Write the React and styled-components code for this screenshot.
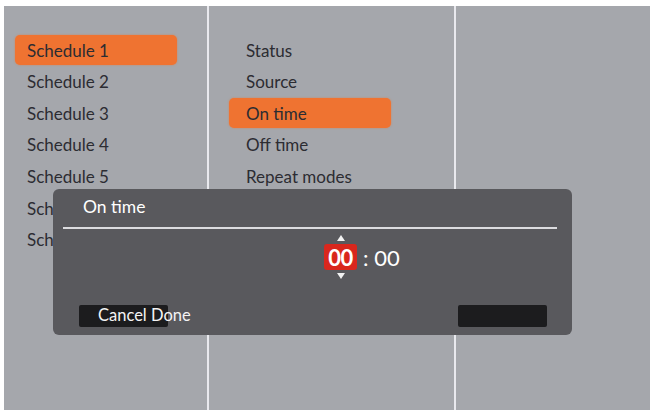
import React, { useState } from 'react';
import styled, { createGlobalStyle } from 'styled-components';

const GlobalStyle = createGlobalStyle`
  html, body {
    margin: 0;
    padding: 0;
    background: #ffffff;
  }
  body {
    font-family: Lato, "Open Sans", sans-serif;
  }
`;

const schedules = ['Schedule 1', 'Schedule 2', 'Schedule 3', 'Schedule 4', 'Schedule 5', 'Schedule 6', 'Schedule 7'];
const settings = ['Status', 'Source', 'On time', 'Off time', 'Repeat modes'];

const Screen = styled.div`
  position: relative;
  margin: 6px 1px 0 4px;
  height: 404px;
  background: #a5a7ac;
  display: grid;
  grid-template-columns: 205px 247px 1fr;
`;

const Column = styled.div`
  border-right: ${(p) => (p.last ? 'none' : '2px solid #e9e9ee')};
  padding: 29px 0 0 ${(p) => p.inset}px;
`;

const MenuList = styled.div`
  display: flex;
  flex-direction: column;
  gap: 1.65px;
`;

const MenuItem = styled.div`
  width: 162px;
  height: 30px;
  box-sizing: border-box;
  display: flex;
  align-items: center;
  padding-left: ${(p) => p.pad}px;
  border-radius: 5px;
  font-size: 17px;
  color: #2c2c32;
  background: ${(p) => (p.active ? '#ef7331' : 'transparent')};
  box-shadow: ${(p) => (p.active ? '0 0 2px rgba(239, 115, 49, 0.7)' : 'none')};
`;

const Dialog = styled.div`
  position: absolute;
  left: 49px;
  top: 183px;
  width: 519px;
  height: 146px;
  border-radius: 6px;
  background: #59595d;
  display: flex;
  flex-direction: column;
  color: #ffffff;
`;

const DialogTitle = styled.div`
  height: 38px;
  display: flex;
  align-items: center;
  padding-left: 30px;
  font-size: 17.5px;
  box-sizing: border-box;
  padding-bottom: 4px;
`;

const Rule = styled.div`
  height: 2px;
  margin: 0 15px 0 10px;
  background: #dcdcdf;
`;

const TimeRow = styled.div`
  display: flex;
  align-items: center;
  padding-left: 271px;
  margin-top: 6px;
  gap: 6px;
`;

const Spinner = styled.div`
  display: flex;
  flex-direction: column;
  align-items: center;
  gap: 3px;
`;

const Arrow = styled.div`
  width: 0;
  height: 0;
  border-left: 4px solid transparent;
  border-right: 4px solid transparent;
  ${(p) => (p.down ? 'border-top: 6px solid #f2f2f2;' : 'border-bottom: 6px solid #f2f2f2;')}
`;

const Field = styled.div`
  width: 33px;
  height: 26px;
  border-radius: 3px;
  background: #d9271d;
  display: flex;
  align-items: center;
  justify-content: center;
  font-size: 22px;
  font-weight: 700;
  letter-spacing: -0.5px;
`;

const Minutes = styled.div`
  font-size: 22px;
  padding-top: 1px;
`;

const Footer = styled.div`
  margin-top: auto;
  margin-bottom: 8px;
  display: flex;
  justify-content: space-between;
  padding: 0 25px 0 26px;
`;

const FooterButton = styled.div`
  position: relative;
  width: 89px;
  height: 22px;
  border-radius: 2px;
  background: #1c1c1e;
`;

const ButtonText = styled.span`
  position: absolute;
  left: 19px;
  top: 0;
  font-size: 16.5px;
  white-space: nowrap;
  color: #f4f4f4;
`;

export default function App() {
  const [schedule] = useState(0);
  const [setting] = useState(2);

  return (
    <>
      <GlobalStyle />
      <Screen>
        <Column inset={11}>
          <MenuList>
            {schedules.map((name, i) => (
              <MenuItem key={name} pad={12} active={i === schedule}>{name}</MenuItem>
            ))}
          </MenuList>
        </Column>
        <Column inset={20}>
          <MenuList>
            {settings.map((name, i) => (
              <MenuItem key={name} pad={17} active={i === setting}>{name}</MenuItem>
            ))}
          </MenuList>
        </Column>
        <Column last />

        <Dialog>
          <DialogTitle>On time</DialogTitle>
          <Rule />
          <TimeRow>
            <Spinner>
              <Arrow />
              <Field>00</Field>
              <Arrow down />
            </Spinner>
            <Minutes>: 00</Minutes>
          </TimeRow>
          <Footer>
            <FooterButton>
              <ButtonText>Cancel Done</ButtonText>
            </FooterButton>
            <FooterButton />
          </Footer>
        </Dialog>
      </Screen>
    </>
  );
}
